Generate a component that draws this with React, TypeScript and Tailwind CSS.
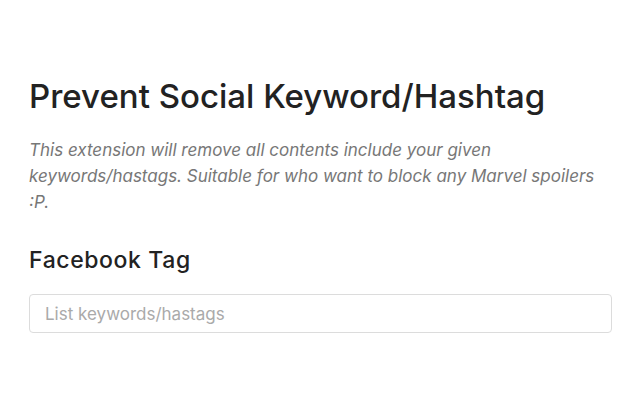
export default function App() {
  return (
    <div className="w-[640px] h-[400px] bg-white overflow-hidden" style={{ fontFamily: 'Inter, "Noto Sans", sans-serif' }}>
      <div className="pt-[76px] pl-[29px] pr-[28px] flex flex-col">
        <h1 className="text-[33px] leading-[40px] font-medium text-[#222]">Prevent Social Keyword/Hashtag</h1>
        <p className="mt-[21px] text-[17px] leading-[26px] italic text-[#777]">
          This extension will remove all contents include your given keywords/hastags. Suitable for who want to block any Marvel spoilers :P.
        </p>
        <h2 className="mt-[30px] text-[23px] leading-[30px] font-medium tracking-[0.6px] text-[#222]">Facebook Tag</h2>
        <input
          type="text"
          placeholder="List keywords/hastags"
          className="mt-[19px] w-full h-[39px] rounded-[4px] border border-[#dcdcdc] px-[15px] text-[17px] placeholder:text-[#aaa] outline-none"
        />
      </div>
    </div>
  );
}
